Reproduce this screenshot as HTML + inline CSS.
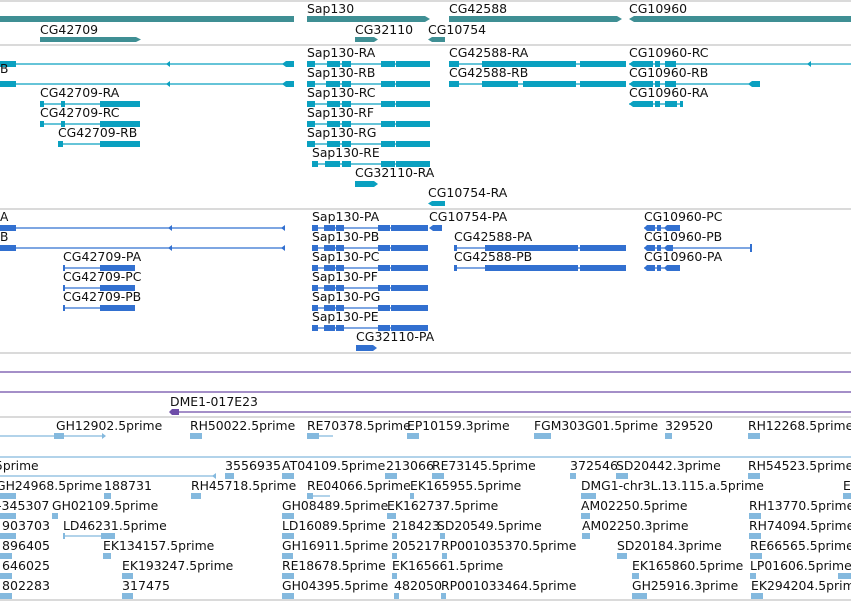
<!DOCTYPE html>
<html><head><meta charset="utf-8"><style>
html,body{margin:0;padding:0;background:#fff;width:851px;height:601px;overflow:hidden}
svg{display:block}
text{font-family:"DejaVu Sans","Liberation Sans",sans-serif;font-size:12px;fill:#111}
</style></head><body>
<svg id="s" width="851" height="601" viewBox="0 0 851 601" xmlns="http://www.w3.org/2000/svg">
<g stroke="#c4c4c4" stroke-width="1.2">
<line x1="0" y1="1" x2="851" y2="1"/><line x1="0" y1="45" x2="851" y2="45"/>
<line x1="0" y1="209" x2="851" y2="209"/><line x1="0" y1="353" x2="851" y2="353"/>
<line x1="0" y1="417" x2="851" y2="417"/><line x1="0" y1="600" x2="851" y2="600"/>
</g>
<g fill="#3f8f94">
<rect x="0" y="16" width="294" height="6"/>
<path d="M307 16H425L430 19L425 22H307Z"/>
<path d="M449 16H617L622 19L617 22H449Z"/>
<path d="M629 19L634 16H851V22H634Z"/>
<path d="M40 37H136L141 39.5L136 42H40Z"/>
<path d="M355 37H374L378 39.5L374 42H355Z"/>
<path d="M428 39.5L432 37H445V42H432Z"/>
</g>
<text x="307" y="13">Sap130</text><text x="449" y="13">CG42588</text><text x="629" y="13">CG10960</text>
<text x="40" y="34">CG42709</text><text x="355" y="34">CG32110</text><text x="428" y="34">CG10754</text>

<g fill="#0aa0c0" stroke="#0aa0c0">
<g stroke-width="1.2">
<line x1="0" y1="64" x2="294" y2="64"/><line x1="0" y1="84" x2="294" y2="84"/>
<line x1="307" y1="64" x2="430" y2="64"/><line x1="307" y1="84" x2="430" y2="84"/><line x1="307" y1="104" x2="430" y2="104"/><line x1="307" y1="124" x2="430" y2="124"/><line x1="307" y1="144" x2="430" y2="144"/><line x1="312" y1="164" x2="430" y2="164"/>
<line x1="449" y1="64" x2="626" y2="64"/><line x1="449" y1="84" x2="626" y2="84"/>
<line x1="629" y1="64" x2="851" y2="64"/><line x1="629" y1="84" x2="760" y2="84"/><line x1="629" y1="104" x2="683" y2="104"/>
<line x1="40" y1="104" x2="140" y2="104"/><line x1="40" y1="124" x2="140" y2="124"/><line x1="58" y1="144" x2="140" y2="144"/>
</g>
<g stroke="none">
<rect x="0" y="61" width="16" height="6"/><rect x="0" y="81" width="16" height="6"/>
<path d="M282 64L286 61H294V67H286Z"/><path d="M282 84L286 81H294V87H286Z"/>
<path d="M166 64l4-3v6z"/><path d="M166 84l4-3v6z"/>
<rect x="327" y="61" width="13" height="6"/><rect x="342" y="61" width="9" height="6"/><rect x="381" y="61" width="14" height="6"/><rect x="396" y="61" width="34" height="6"/>
<rect x="326" y="81" width="14" height="6"/><rect x="342" y="81" width="9" height="6"/><rect x="381" y="81" width="14" height="6"/><rect x="396" y="81" width="34" height="6"/>
<rect x="327" y="101" width="13" height="6"/><rect x="342" y="101" width="9" height="6"/><rect x="381" y="101" width="14" height="6"/><rect x="396" y="101" width="34" height="6"/>
<rect x="327" y="121" width="13" height="6"/><rect x="342" y="121" width="9" height="6"/><rect x="381" y="121" width="14" height="6"/><rect x="396" y="121" width="34" height="6"/>
<rect x="327" y="141" width="13" height="6"/><rect x="342" y="141" width="9" height="6"/><rect x="381" y="141" width="14" height="6"/><rect x="396" y="141" width="34" height="6"/>
<rect x="325" y="161" width="15" height="6"/><rect x="342" y="161" width="9" height="6"/><rect x="381" y="161" width="14" height="6"/><rect x="396" y="161" width="34" height="6"/>
<rect x="307" y="61" width="8" height="6"/><rect x="307" y="81" width="8" height="6"/><rect x="307" y="101" width="8" height="6"/><rect x="307" y="121" width="8" height="6"/><rect x="307" y="141" width="8" height="6"/><rect x="312" y="161" width="6" height="6"/>
<rect x="449" y="61" width="10" height="6"/><rect x="482" y="61" width="94" height="6"/><rect x="580" y="61" width="46" height="6"/>
<rect x="449" y="81" width="10" height="6"/><rect x="482" y="81" width="36" height="6"/><rect x="523" y="81" width="53" height="6"/><rect x="580" y="81" width="46" height="6"/>
<path d="M629 64l4-3h20v6h-20z"/><rect x="655" y="61" width="5" height="6"/><rect x="665" y="61" width="11" height="6"/><path d="M807 64l4-3v6z"/>
<path d="M629 84l4-3h20v6h-20z"/><rect x="655" y="81" width="5" height="6"/><rect x="665" y="81" width="11" height="6"/><path d="M748 84l4-3h8v6h-8z"/>
<path d="M629 104l4-3h20v6h-20z"/><rect x="655" y="101" width="5" height="6"/><rect x="665" y="101" width="12" height="6"/><rect x="680" y="101" width="3" height="6"/>
<rect x="40" y="101" width="4" height="6"/><rect x="100" y="101" width="40" height="6"/><rect x="61" y="101" width="4" height="6"/>
<rect x="40" y="121" width="4" height="6"/><rect x="100" y="121" width="40" height="6"/><rect x="61" y="121" width="4" height="6"/>
<rect x="58" y="141" width="5" height="6"/><rect x="100" y="141" width="40" height="6"/>
<path d="M355 181H374L378 184L374 187H355Z"/>
<path d="M428 203.5L432 201H445V206H432Z"/>
</g></g>
<text x="0" y="73">B</text>
<text x="307" y="57">Sap130-RA</text><text x="449" y="57">CG42588-RA</text><text x="629" y="57">CG10960-RC</text>
<text x="307" y="77">Sap130-RB</text><text x="449" y="77">CG42588-RB</text><text x="629" y="77">CG10960-RB</text>
<text x="40" y="97">CG42709-RA</text><text x="307" y="97">Sap130-RC</text><text x="629" y="97">CG10960-RA</text>
<text x="40" y="117">CG42709-RC</text><text x="307" y="117">Sap130-RF</text>
<text x="58" y="137">CG42709-RB</text><text x="307" y="137">Sap130-RG</text>
<text x="312" y="157">Sap130-RE</text>
<text x="355" y="177">CG32110-RA</text>
<text x="428" y="197">CG10754-RA</text>

<g fill="#3270d0" stroke="#3270d0">
<g stroke-width="1.2">
<line x1="0" y1="228" x2="285" y2="228"/><line x1="0" y1="248" x2="285" y2="248"/>
<line x1="312" y1="228" x2="428" y2="228"/><line x1="312" y1="248" x2="428" y2="248"/><line x1="312" y1="268" x2="428" y2="268"/><line x1="312" y1="288" x2="428" y2="288"/><line x1="312" y1="308" x2="428" y2="308"/><line x1="312" y1="328" x2="428" y2="328"/>
<line x1="454" y1="248" x2="626" y2="248"/><line x1="454" y1="268" x2="626" y2="268"/>
<line x1="644" y1="228" x2="680" y2="228"/><line x1="644" y1="248" x2="752" y2="248"/><line x1="644" y1="268" x2="680" y2="268"/>
<line x1="63" y1="268" x2="135" y2="268"/><line x1="63" y1="288" x2="135" y2="288"/><line x1="63" y1="308" x2="135" y2="308"/>
</g>
<g stroke="none">
<rect x="0" y="225" width="16" height="6"/><rect x="0" y="245" width="16" height="6"/>
<path d="M168 228l4-3v6z"/><path d="M168 248l4-3v6z"/><path d="M281 228l4-3v6z"/><path d="M281 248l4-3v6z"/>
<rect x="312" y="225" width="6" height="6"/><rect x="324" y="225" width="11" height="6"/><rect x="336" y="225" width="8" height="6"/><rect x="378" y="225" width="12" height="6"/><rect x="391" y="225" width="37" height="6"/>
<rect x="312" y="245" width="6" height="6"/><rect x="324" y="245" width="11" height="6"/><rect x="336" y="245" width="8" height="6"/><rect x="378" y="245" width="12" height="6"/><rect x="391" y="245" width="37" height="6"/>
<rect x="312" y="265" width="6" height="6"/><rect x="324" y="265" width="11" height="6"/><rect x="336" y="265" width="8" height="6"/><rect x="378" y="265" width="12" height="6"/><rect x="391" y="265" width="37" height="6"/>
<rect x="312" y="285" width="6" height="6"/><rect x="324" y="285" width="11" height="6"/><rect x="336" y="285" width="8" height="6"/><rect x="378" y="285" width="12" height="6"/><rect x="391" y="285" width="37" height="6"/>
<rect x="312" y="305" width="6" height="6"/><rect x="324" y="305" width="11" height="6"/><rect x="336" y="305" width="8" height="6"/><rect x="378" y="305" width="12" height="6"/><rect x="391" y="305" width="37" height="6"/>
<rect x="312" y="325" width="6" height="6"/><rect x="324" y="325" width="11" height="6"/><rect x="336" y="325" width="8" height="6"/><rect x="378" y="325" width="12" height="6"/><rect x="391" y="325" width="37" height="6"/>
<path d="M429 228l4-3h9v6h-9z"/>
<rect x="454" y="245" width="3" height="6"/><rect x="485" y="245" width="93" height="6"/><rect x="580" y="245" width="46" height="6"/>
<rect x="454" y="265" width="3" height="6"/><rect x="485" y="265" width="93" height="6"/><rect x="580" y="265" width="46" height="6"/>
<path d="M644 228l3-3h8v6h-8z"/><rect x="657" y="225" width="4" height="6"/><path d="M664 228l3-3h13v6h-13z"/>
<path d="M644 248l3-3h8v6h-8z"/><rect x="657" y="245" width="4" height="6"/><path d="M664 248l3-3h6v6h-6z"/><rect x="750" y="244" width="2" height="8"/>
<path d="M644 268l3-3h8v6h-8z"/><rect x="657" y="265" width="4" height="6"/><path d="M664 268l3-3h13v6h-13z"/>
<rect x="63" y="265" width="2" height="6"/><rect x="100" y="265" width="35" height="6"/>
<rect x="63" y="285" width="2" height="6"/><rect x="100" y="285" width="35" height="6"/>
<rect x="63" y="305" width="2" height="6"/><rect x="100" y="305" width="35" height="6"/>
<path d="M356 345H373L377 348L373 351H356Z"/>
</g></g>
<text x="0" y="221">A</text><text x="312" y="221">Sap130-PA</text><text x="429" y="221">CG10754-PA</text><text x="644" y="221">CG10960-PC</text>
<text x="0" y="241">B</text><text x="312" y="241">Sap130-PB</text><text x="454" y="241">CG42588-PA</text><text x="644" y="241">CG10960-PB</text>
<text x="63" y="261">CG42709-PA</text><text x="312" y="261">Sap130-PC</text><text x="454" y="261">CG42588-PB</text><text x="644" y="261">CG10960-PA</text>
<text x="63" y="281">CG42709-PC</text><text x="312" y="281">Sap130-PF</text>
<text x="63" y="301">CG42709-PB</text><text x="312" y="301">Sap130-PG</text>
<text x="312" y="321">Sap130-PE</text>
<text x="356" y="341">CG32110-PA</text>

<g stroke="#6d4ca8" stroke-width="1.3"><line x1="0" y1="372" x2="851" y2="372"/><line x1="0" y1="392" x2="851" y2="392"/><line x1="170" y1="412" x2="851" y2="412"/></g>
<path d="M169 412l3-3h7v6h-7z" fill="#6d4ca8"/>
<text x="170" y="406">DME1-017E23</text>

<g fill="#84b9de" stroke="#84b9de">
<g stroke-width="1.2">
<line x1="0" y1="436" x2="105" y2="436"/><line x1="0" y1="457" x2="851" y2="457"/><line x1="0" y1="476" x2="215" y2="476"/><line x1="63" y1="536" x2="113" y2="536"/><line x1="307" y1="436" x2="333" y2="436"/><line x1="307" y1="496" x2="330" y2="496"/>
</g>
<g stroke="none">
<rect x="54" y="433" width="10" height="6"/><path d="M102 433l4 3-4 3z"/>
<rect x="190" y="433" width="12" height="6"/><rect x="307" y="433" width="12" height="6"/><rect x="407" y="433" width="12" height="6"/><rect x="534" y="433" width="17" height="6"/><rect x="665" y="433" width="7" height="6"/><rect x="748" y="433" width="12" height="6"/>
<path d="M212 476l4-3v6z"/><rect x="225" y="473" width="9" height="6"/><rect x="282" y="473" width="12" height="6"/><rect x="385" y="473" width="12" height="6"/><rect x="432" y="473" width="12" height="6"/><rect x="570" y="473" width="6" height="6"/><rect x="616" y="473" width="12" height="6"/><rect x="748" y="473" width="12" height="6"/>
<rect x="0" y="493" width="16" height="6"/><rect x="104" y="493" width="7" height="6"/><rect x="191" y="493" width="10" height="6"/><rect x="307" y="493" width="6" height="6"/><rect x="410" y="493" width="4" height="6"/><rect x="581" y="493" width="15" height="6"/><rect x="843" y="493" width="8" height="6"/>
<rect x="0" y="513" width="16" height="6"/><rect x="52" y="513" width="6" height="6"/><rect x="282" y="513" width="12" height="6"/><rect x="387" y="513" width="9" height="6"/><rect x="581" y="513" width="9" height="6"/><rect x="749" y="513" width="12" height="6"/>
<rect x="0" y="533" width="16" height="6"/><rect x="63" y="533" width="2" height="6"/><rect x="101" y="533" width="14" height="6"/><rect x="282" y="533" width="12" height="6"/><rect x="392" y="533" width="5" height="6"/><rect x="440" y="533" width="5" height="6"/><rect x="582" y="533" width="8" height="6"/><rect x="749" y="533" width="12" height="6"/>
<rect x="0" y="553" width="12" height="6"/><rect x="103" y="553" width="8" height="6"/><rect x="282" y="553" width="11" height="6"/><rect x="392" y="553" width="5" height="6"/><rect x="442" y="553" width="5" height="6"/><rect x="617" y="553" width="10" height="6"/><rect x="750" y="553" width="12" height="6"/>
<rect x="0" y="573" width="12" height="6"/><rect x="122" y="573" width="11" height="6"/><rect x="282" y="573" width="12" height="6"/><rect x="392" y="573" width="5" height="6"/><rect x="632" y="573" width="7" height="6"/><rect x="750" y="573" width="6" height="6"/><rect x="838" y="573" width="13" height="6"/>
<rect x="0" y="593" width="12" height="6"/><rect x="122" y="593" width="11" height="6"/><rect x="282" y="593" width="12" height="6"/><rect x="394" y="593" width="5" height="6"/><rect x="441" y="593" width="5" height="6"/><rect x="632" y="593" width="15" height="6"/><rect x="751" y="593" width="12" height="6"/>
</g></g>
<text x="56" y="430">GH12902.5prime</text><text x="190" y="430">RH50022.5prime</text><text x="307" y="430">RE70378.5prime</text><text x="407" y="430">EP10159.3prime</text><text x="534" y="430">FGM303G01.5prime</text><text x="665" y="430">329520</text><text x="748" y="430">RH12268.5prime</text>
<text x="-5" y="470">5prime</text><text x="225" y="470">3556935</text><text x="282" y="470">AT04109.5prime</text><text x="386" y="470">213066</text><text x="432" y="470">RE73145.5prime</text><text x="570" y="470">372546</text><text x="616" y="470">SD20442.3prime</text><text x="748" y="470">RH54523.5prime</text>
<text x="-4" y="490">GH24968.5prime</text><text x="104" y="490">188731</text><text x="191" y="490">RH45718.5prime</text><text x="307" y="490">RE04066.5prime</text><text x="410" y="490">EK165955.5prime</text><text x="581" y="490">DMG1-chr3L.13.115.a.5prime</text><text x="843" y="490">E</text>
<text x="-3" y="510">-345307</text><text x="52" y="510">GH02109.5prime</text><text x="282" y="510">GH08489.5prime</text><text x="387" y="510">EK162737.5prime</text><text x="581" y="510">AM02250.5prime</text><text x="749" y="510">RH13770.5prime</text>
<text x="2" y="530">903703</text><text x="63" y="530">LD46231.5prime</text><text x="282" y="530">LD16089.5prime</text><text x="392" y="530">218423</text><text x="437" y="530">SD20549.5prime</text><text x="582" y="530">AM02250.3prime</text><text x="749" y="530">RH74094.5prime</text>
<text x="2" y="550">896405</text><text x="103" y="550">EK134157.5prime</text><text x="282" y="550">GH16911.5prime</text><text x="392" y="550">205217</text><text x="441" y="550">RP001035370.5prime</text><text x="617" y="550">SD20184.3prime</text><text x="750" y="550">RE66565.5prime</text>
<text x="2" y="570">646025</text><text x="122" y="570">EK193247.5prime</text><text x="282" y="570">RE18678.5prime</text><text x="392" y="570">EK165661.5prime</text><text x="632" y="570">EK165860.5prime</text><text x="750" y="570">LP01606.5prime</text>
<text x="2" y="590">802283</text><text x="122" y="590">317475</text><text x="282" y="590">GH04395.5prime</text><text x="394" y="590">482050</text><text x="441" y="590">RP001033464.5prime</text><text x="632" y="590">GH25916.3prime</text><text x="751" y="590">EK294204.5prime</text>
</svg>
<script>
(function(){
var W={A:8.2,B:8.2,C:8.4,D:9.2,E:7.6,F:6.9,G:9.3,H:9.0,K:7.9,L:6.7,M:10.4,N:9.0,P:7.2,R:8.3,S:7.6,T:7.3,a:7.4,c:6.6,e:7.4,h:7.6,i:3.3,m:11.7,p:7.6,r:4.9,'.':3.8,'-':4.3};
var ts=document.querySelectorAll('text');
for(var i=0;i<ts.length;i++){var s=ts[i].textContent,w=0;
for(var j=0;j<s.length;j++){var c=s[j];w+=(c>='0'&&c<='9')?7.85:(W[c]||7.6);}
w*=1.02;ts[i].setAttribute('textLength',w.toFixed(1));ts[i].setAttribute('lengthAdjust','spacingAndGlyphs');}
})();
</script>
</body></html>
